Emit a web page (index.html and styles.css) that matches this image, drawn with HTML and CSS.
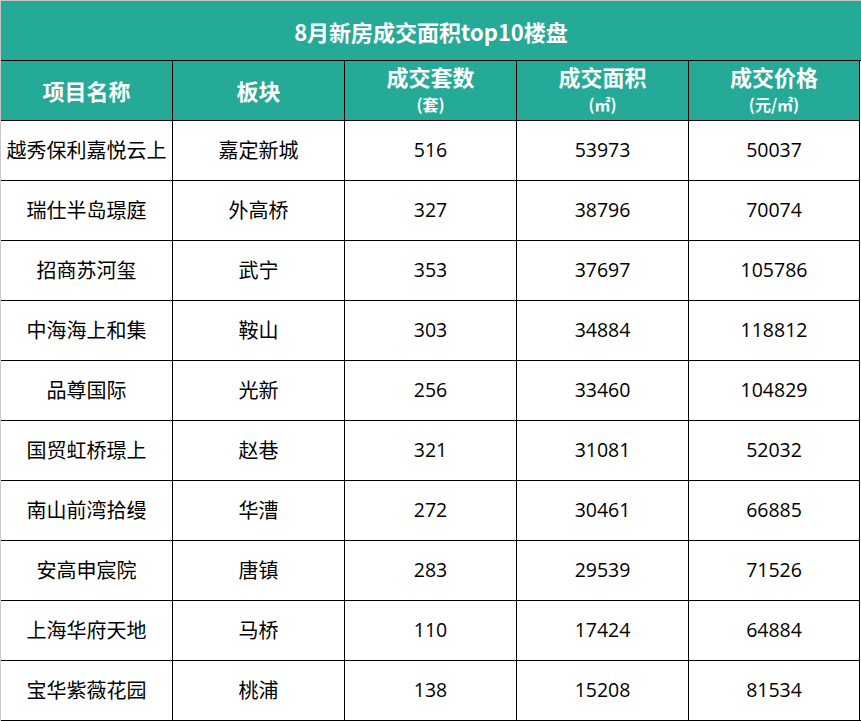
FILE: index.html
```html
<!DOCTYPE html>
<html lang="zh-CN">
<head>
<meta charset="utf-8">
<title>8月新房成交面积top10楼盘</title>
<link rel="stylesheet" href="styles.css">
</head>
<body>
<div class="sheet">
  <div class="title">8月新房成交面积top10楼盘</div>
  <div class="row head">
    <div class="cell">项目名称</div>
    <div class="cell">板块</div>
    <div class="cell"><span class="h">成交套数</span><span class="unit">(套)</span></div>
    <div class="cell"><span class="h">成交面积</span><span class="unit">(㎡)</span></div>
    <div class="cell"><span class="h">成交价格</span><span class="unit">(元/㎡)</span></div>
  </div>
  <div class="row"><div class="cell">越秀保利嘉悦云上</div><div class="cell">嘉定新城</div><div class="cell num">516</div><div class="cell num">53973</div><div class="cell num">50037</div></div>
  <div class="row"><div class="cell">瑞仕半岛璟庭</div><div class="cell">外高桥</div><div class="cell num">327</div><div class="cell num">38796</div><div class="cell num">70074</div></div>
  <div class="row"><div class="cell">招商苏河玺</div><div class="cell">武宁</div><div class="cell num">353</div><div class="cell num">37697</div><div class="cell num">105786</div></div>
  <div class="row"><div class="cell">中海海上和集</div><div class="cell">鞍山</div><div class="cell num">303</div><div class="cell num">34884</div><div class="cell num">118812</div></div>
  <div class="row"><div class="cell">品尊国际</div><div class="cell">光新</div><div class="cell num">256</div><div class="cell num">33460</div><div class="cell num">104829</div></div>
  <div class="row"><div class="cell">国贸虹桥璟上</div><div class="cell">赵巷</div><div class="cell num">321</div><div class="cell num">31081</div><div class="cell num">52032</div></div>
  <div class="row"><div class="cell">南山前湾拾缦</div><div class="cell">华漕</div><div class="cell num">272</div><div class="cell num">30461</div><div class="cell num">66885</div></div>
  <div class="row"><div class="cell">安高申宸院</div><div class="cell">唐镇</div><div class="cell num">283</div><div class="cell num">29539</div><div class="cell num">71526</div></div>
  <div class="row"><div class="cell">上海华府天地</div><div class="cell">马桥</div><div class="cell num">110</div><div class="cell num">17424</div><div class="cell num">64884</div></div>
  <div class="row"><div class="cell">宝华紫薇花园</div><div class="cell">桃浦</div><div class="cell num">138</div><div class="cell num">15208</div><div class="cell num">81534</div></div>
</div>
</body>
</html>
```
FILE: styles.css
```css
* { box-sizing: border-box; }
html, body { margin: 0; padding: 0; background: #fff; }
body { font-family: "Noto Sans CJK SC", "Noto Sans", sans-serif; color: #000; }
.sheet {
  width: 861px;
  border-top: 1px solid #c8c8c8;
  border-left: 1px solid #c8c8c8;
}
.title {
  height: 60px;
  background: #25aa98;
  border-bottom: 1px solid #000;
  color: #fff;
  font-weight: 700;
  font-size: 22px;
  display: flex;
  align-items: center;
  justify-content: center;
}
.row {
  display: grid;
  grid-template-columns: 172px 172px 172px 172px 171px;
  height: 60px;
}
.cell {
  border-right: 1px solid #000;
  border-bottom: 1px solid #000;
  display: flex;
  flex-direction: column;
  align-items: center;
  justify-content: center;
  font-size: 20px;
  line-height: 1;
  padding-bottom: 1px;
}
.row:last-child .cell { border-bottom: none; }
.sheet .row:last-child { border-bottom: 1px solid #000; height: 60px; }
.head .cell {
  background: #25aa98;
  color: #fff;
  font-weight: 700;
  font-size: 22px;
}
.head .h { line-height: 24px; margin-top: -4px; }
.unit {
  font-size: 16px;
  line-height: 16px;
  margin-top: 8px;
}
.num { font-family: "Open Sans", "Noto Sans", sans-serif; font-size: 19.5px; }
```
